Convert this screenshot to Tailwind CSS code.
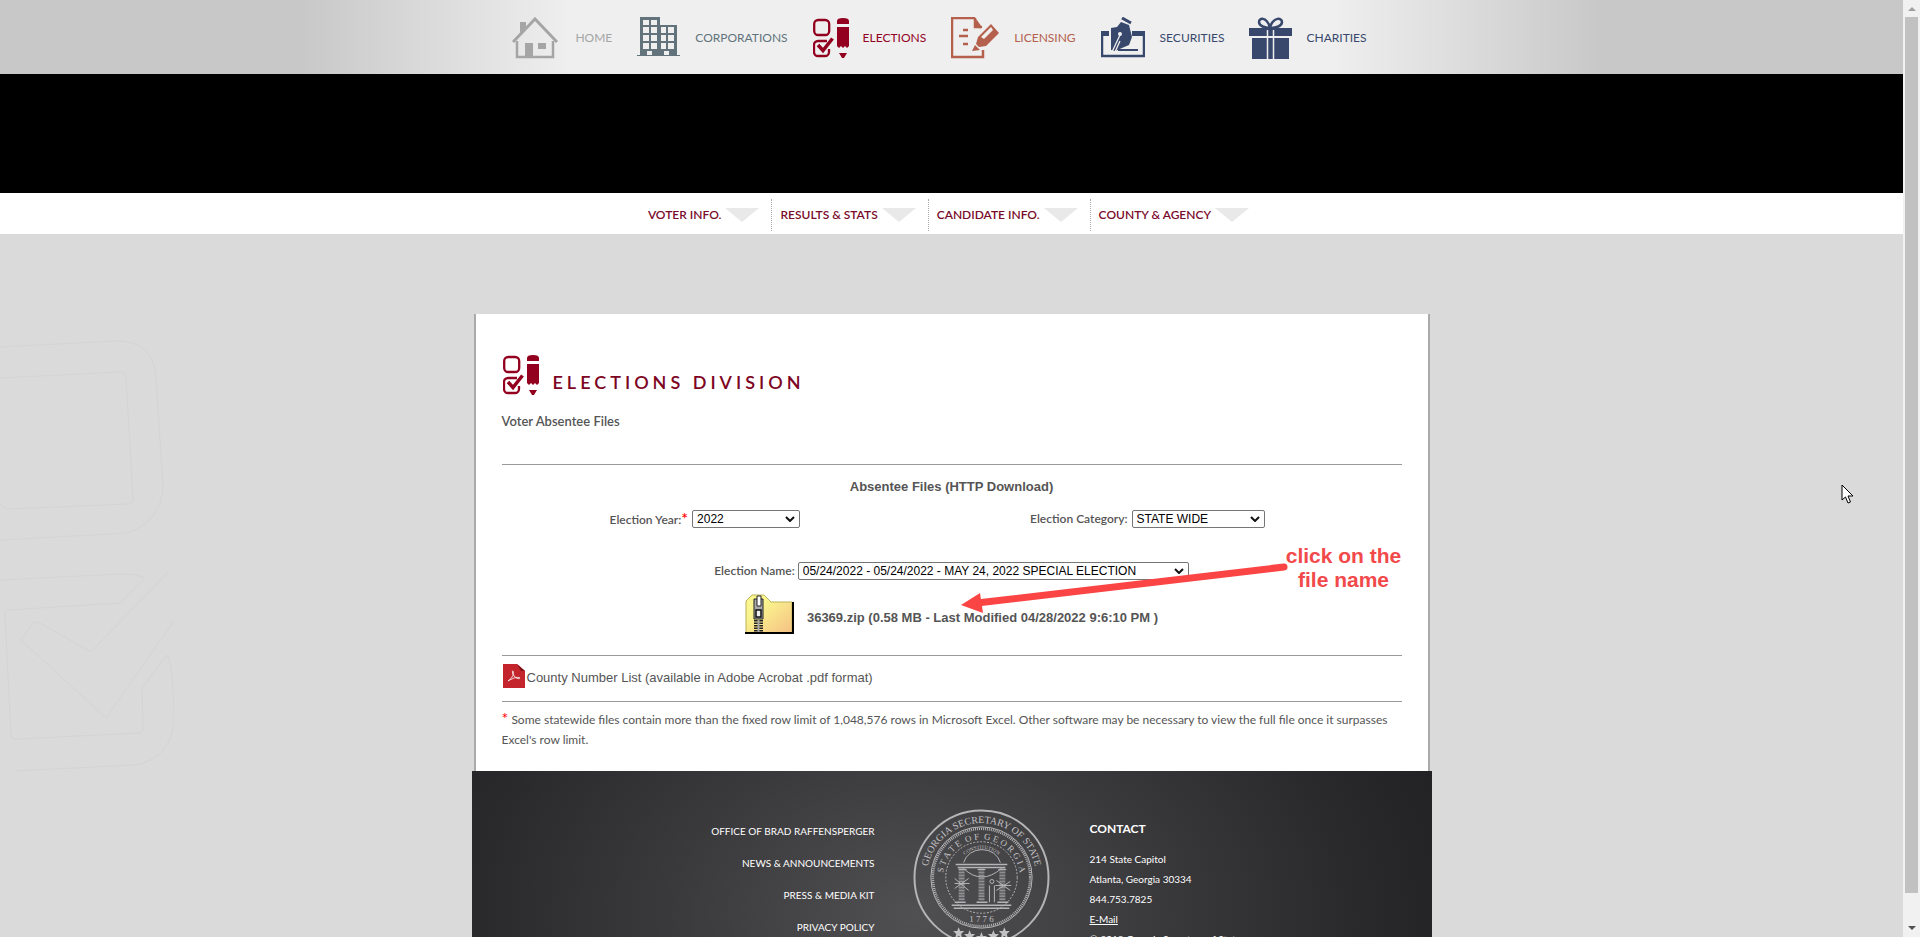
<!DOCTYPE html>
<html lang="en">
<head>
<meta charset="utf-8">
<title>Elections Division - Voter Absentee Files</title>
<script src="https://cdn.jsdelivr.net/npm/@tailwindcss/browser@4"></script>
</head>
<body class="flex h-screen overflow-hidden bg-[#dadada] font-['Lato',sans-serif] text-[#555]">
<svg class="hidden">
  <symbol id="elections" viewBox="0 0 36 40">
    <g fill="none" stroke="currentColor" stroke-width="2.3">
      <rect x="1.200" y="2" width="15" height="15" rx="4"/>
      <path d="M14 23H5a4 4 0 0 0-4 4v7a4 4 0 0 0 4 4h7a4 4 0 0 0 4-4v-3"/>
      <path d="M5 27l5 5.500 9.500-12" stroke-width="3.500"/>
    </g>
    <g fill="currentColor"><path d="M24 6V3q0-3 6-3t6 3v3zM24 9h12v19l-2 2-2-2-2 2-2-2-2 2-2-2zM26 35h8l-3 5h-2z"/></g>
  </symbol>
  <symbol id="chevron" viewBox="0 0 10 6"><path d="M1 1l4 4 4-4" fill="none" stroke="#111" stroke-width="2"/></symbol>
  <symbol id="drop" viewBox="0 0 34 14"><path d="M0 0h34L17 14z" fill="#e9e9e9"/></symbol>
</svg>

<div class="relative min-w-0 flex-1">
  <header>
    <nav aria-label="Divisions" class="flex h-[74px] items-center justify-center gap-[25px] bg-[linear-gradient(90deg,#c8c8c8_calc(50%_-_650px),#efefef_calc(50%_-_380px),#efefef_calc(50%_+_380px),#c8c8c8_calc(50%_+_650px))] pt-[2px] pr-6 text-xs">
      <a href="#" class="flex items-center gap-[17px] text-[#a5a5a5]">
        <svg class="h-[42px] w-[46px]" viewBox="0 0 46 42" fill="none" stroke="currentColor"><path d="M1 25L23 2l22 23" stroke-width="3"/><path d="M5 24v16h36V24" stroke-width="2.5"/><path d="M8 5h6v5l-6 6zM13 26h8v13h-8zM26 26h8v6h-8z" fill="currentColor" stroke="none"/></svg>
        HOME</a>
      <a href="#" class="flex items-center gap-[15px] text-[#62737c]">
        <svg class="h-[42px] w-[43px]" viewBox="0 0 43 42"><path d="M3 0h20v8h17v30h3v1H0v-1h3z" fill="currentColor"/><path d="M6 3h6v5H6zM14 3h6v5h-6zM6 10h6v6H6zM14 10h6v6h-6zM6 18h6v6H6zM14 18h6v6h-6zM6 26h6v6H6zM14 26h6v6h-6zM24 10h5v6h-5zM31 10h6v6h-6zM24 18h5v6h-5zM31 18h6v6h-6zM24 26h5v6h-5zM31 26h6v6h-6zM10 34h5v4h-5zM27 34h5v4h-5z" fill="#efefef"/></svg>
        CORPORATIONS</a>
      <a href="#" class="flex items-center gap-[14px] text-[#93001f]"><svg class="h-10 w-9"><use href="#elections"/></svg>ELECTIONS</a>
      <a href="#" class="flex items-center gap-[15px] text-[#b4604d]">
        <svg class="h-[42px] w-12" viewBox="0 0 48 42" fill="none" stroke="currentColor" stroke-width="2.5"><path d="M32 33v7H1V1h22l7 10M12 13h5M8 19h9M12 27h5M24 1v9h7"/><path d="M23 1l8 10h-8zM27 20L40 7l8 9-13 13-7 1-3-3zM24 28l5 5-8 1z" fill="currentColor" stroke="none"/><path d="M30 20l10-10 2 3-9 9z" fill="#efefef" stroke="none"/></svg>
        LICENSING</a>
      <a href="#" class="flex items-center gap-[15px] text-[#38486d]">
        <svg class="h-[42px] w-11" viewBox="0 0 44 42"><path d="M8 16H1v23h42V16H31" fill="none" stroke="currentColor" stroke-width="2.500"/><path d="M0 14h8v5H0zM31 14h13v5H31z" fill="currentColor"/><path d="M10 33V11l6-1 4-5 8 3 3 12-3 8-14 6z" fill="currentColor"/><path d="M21 1l9 5" stroke="currentColor" stroke-width="3"/><path d="M11 35l8-17M14 35l5-11" stroke="#efefef" stroke-width="1.300"/><circle cx="19" cy="17" r="2" fill="#efefef"/><path d="M17 33h20" stroke="currentColor" stroke-width="2"/></svg>
        SECURITIES</a>
      <a href="#" class="flex items-center gap-[14px] text-[#38486d]">
        <svg class="h-[42px] w-[43px]" viewBox="0 0 43 42"><path d="M0 11h43v8H0zM3 21h37v21H3z" fill="currentColor"/><path d="M18.500 13v29M24.500 13v29" stroke="#efefef" stroke-width="1.500"/><path d="M21 11C16 11 10 9 10 5s7-6 11 5c4-11 12-9 12-5s-6 6-11 6" fill="none" stroke="currentColor" stroke-width="2.500"/></svg>
        CHARITIES</a>
    </nav>
    <div class="h-[119px] bg-black"></div>
    <nav aria-label="Elections" class="flex h-[41px] items-center justify-center bg-white pt-[2px] pr-[2px] text-xs font-semibold text-[#7a0a2a]">
      <a href="#" class="flex h-8 items-center gap-1 px-2 pr-3">VOTER INFO.<svg class="h-[14px] w-[34px]"><use href="#drop"/></svg></a>
      <a href="#" class="flex h-8 items-center gap-1 border-l border-dotted border-[#aaa] px-2 pr-3">RESULTS &amp; STATS<svg class="h-[14px] w-[34px]"><use href="#drop"/></svg></a>
      <a href="#" class="flex h-8 items-center gap-1 border-l border-dotted border-[#aaa] px-2 pr-3">CANDIDATE INFO.<svg class="h-[14px] w-[34px]"><use href="#drop"/></svg></a>
      <a href="#" class="flex h-8 items-center gap-1 border-l border-dotted border-[#aaa] px-2 pr-3">COUNTY &amp; AGENCY<svg class="h-[14px] w-[34px]"><use href="#drop"/></svg></a>
    </nav>
  </header>

  <!-- Faint ballot boxes behind the page -->
  <svg class="absolute top-[320px] left-0 h-[452px] w-[174px]" viewBox="0 10 174 452" fill="none" stroke="#d4d4d4"><path d="M0 37l115-6q38-1 41 36l7 110q-2 34-35 46L0 230M0 68l120-6q5 0 6 5l7 122q0 4-5 5L6 199l-6-5M0 270l120-6q18 0 25 4l-25 25L8 300q-3 0-3 5l6 120q0 5 6 4l121-6q5 0 5-5l-1-40 25-33q6 10 7 60c0 30-15 46-40 50L15 461M168 262l-77 80-53-30q-4-1-6 3l-11 15 85 78 70-100"/></svg>

  <div class="mx-auto mt-20 w-[960px] max-w-full">
    <main class="relative mx-[2px] border-x-2 border-[#aaa] bg-white px-[26px] pt-[41px] pb-[21px]">
      <h1 class="flex items-end gap-[14px] text-lg leading-[26px] font-semibold tracking-[4px] text-[#7d0523]"><svg class="ml-[1px] h-10 w-9 text-[#93001f]"><use href="#elections"/></svg>ELECTIONS DIVISION</h1>
      <h2 class="mt-4 text-[13px] leading-5 font-semibold">Voter Absentee Files</h2>
      <hr class="mt-[33px] border-[#999]">
      <h3 class="mt-3 text-center font-['Liberation_Sans',Arial,sans-serif] text-[13px] leading-5 font-bold">Absentee Files (HTTP Download)</h3>
      <form>
        <div class="mt-[13px] flex gap-[230px] pl-[108px] text-xs">
          <div class="flex items-center"><label for="year" class="mr-1 font-semibold">Election Year:<span class="text-base leading-4 text-[#f00]">*</span></label>
            <span class="relative flex items-center"><select id="year" class="h-[18px] w-[108px] appearance-none rounded-[2px] border border-[#767676] bg-white pl-1 font-['Liberation_Sans',Arial,sans-serif] text-xs leading-4 text-black"><option>2022</option></select><svg class="pointer-events-none absolute right-[5px] h-[6px] w-[10px]"><use href="#chevron"/></svg></span></div>
          <div class="flex items-center"><label for="category" class="mr-1 font-semibold">Election Category:</label>
            <span class="relative flex items-center"><select id="category" class="h-[18px] w-[133px] appearance-none rounded-[2px] border border-[#767676] bg-white pl-1 font-['Liberation_Sans',Arial,sans-serif] text-xs leading-4 text-black"><option>STATE WIDE</option></select><svg class="pointer-events-none absolute right-[5px] h-[6px] w-[10px]"><use href="#chevron"/></svg></span></div>
        </div>
        <div class="mt-[34px] flex items-center justify-center text-xs"><label for="name" class="mr-[3px] font-semibold">Election Name:</label>
          <span class="relative flex items-center"><select id="name" class="h-[18px] w-[391px] appearance-none rounded-[2px] border border-[#767676] bg-white pl-1 font-['Liberation_Sans',Arial,sans-serif] text-xs leading-4 text-black"><option>05/24/2022 - 05/24/2022 - MAY 24, 2022 SPECIAL ELECTION</option></select><svg class="pointer-events-none absolute right-[5px] h-[6px] w-[10px]"><use href="#chevron"/></svg></span></div>
      </form>
      <a href="#" class="mt-[14px] flex items-center justify-center gap-[13px] font-['Liberation_Sans',Arial,sans-serif] text-[13px] font-bold">
        <svg class="h-10 w-[49px]" viewBox="0 0 49 40"><defs><linearGradient id="folder" x1="0" y1="0" x2="1" y2="1"><stop offset="0.300" stop-color="#faf58e"/><stop offset="1" stop-color="#f5c084"/></linearGradient></defs><path d="M1 39V7l6-6h12l7 7h21v31z" fill="url(#folder)" stroke="#b9b35a"/><path d="M0 39h48V8" fill="none" stroke="#000" stroke-width="2"/><path d="M9 5h9v20H9z" fill="#aaa" stroke="#222"/><path d="M12 2h4v10h-4z" fill="#fff" stroke="#222"/><path d="M11 16h5v7h-5z" fill="#eee" stroke="#111" stroke-width="1.500"/><path d="M11 26v12M16 26v12" stroke="#222" stroke-width="4" stroke-dasharray="1.500 1"/><path d="M13.500 26v12" stroke="#aaa" stroke-width="2"/></svg>
        <span class="pt-2">36369.zip (0.58 MB - Last Modified 04/28/2022 9:6:10 PM )</span></a>
      <hr class="mt-[21px] border-[#999]">
      <a href="#" class="mt-2 flex items-center gap-[2px] pl-[1px] font-['Liberation_Sans',Arial,sans-serif] text-[13px]">
        <svg class="h-6 w-[22px]" viewBox="0 0 22 24"><path d="M0 0h14l8 7v17H0z" fill="#c4242b"/><path d="M14 0l8 7h-4z" fill="#7e1118"/><path d="M5 17c5-3 6-8 5-10-1-1-1 3 2 6 2 2 5 2 5 1s-5-1-8 1c-3 1-4 2-4 2z" fill="none" stroke="#fff" stroke-width=".8"/></svg>
        <span class="pt-1">County Number List (available in Adobe Acrobat .pdf format)</span></a>
      <hr class="mt-[13px] border-[#999]">
      <p class="mt-2 text-xs leading-5"><span class="text-base leading-4 text-[#f00]">*</span> Some statewide files contain more than the fixed row limit of 1,048,576 rows in Microsoft Excel. Other software may be necessary to view the full file once it surpasses Excel's row limit.</p>

      <!-- Callout pointing at the file name -->
      <svg class="absolute top-[245px] left-[485px] h-[60px] w-[330px]" viewBox="0 0 330 60"><path d="M16 44L323 8" stroke="#fb4544" stroke-width="7" stroke-linecap="round"/><path d="M0 46l19-12 3 20z" fill="#fb4544"/></svg>
      <p class="absolute top-[230px] left-[801px] w-[134px] text-center font-['Liberation_Sans',Arial,sans-serif] text-[21px] leading-6 font-bold text-[#f2494b]">click on the<br>file name</p>
    </main>

    <footer class="flex h-[240px] bg-[radial-gradient(ellipse_560px_400px_at_46%_60%,#504f52,#39383b_45%,#29282a_80%,#222123)] text-[10px] text-white">
      <ul class="w-[403px] pt-[50px] text-right leading-5">
        <li class="mb-3"><a href="#">OFFICE OF BRAD RAFFENSPERGER</a></li>
        <li class="mb-3"><a href="#">NEWS &amp; ANNOUNCEMENTS</a></li>
        <li class="mb-3"><a href="#">PRESS &amp; MEDIA KIT</a></li>
        <li><a href="#">PRIVACY POLICY</a></li>
      </ul>
      <svg class="mt-[38px] ml-[38px] h-[137px] w-[137px]" viewBox="0 0 138 138" role="img" aria-label="Georgia Secretary of State seal" fill="none" stroke="#b5b5b7">
        <defs><path id="outer-arc" d="M14 69a55 55 0 0 1 110 0"/><path id="inner-arc" d="M32 82A39 39 0 1 1 106 82"/><path id="arch" d="M44 65a25 25 0 0 1 50 0"/></defs>
        <circle cx="69" cy="69" r="67.500" stroke-width="2"/>
        <circle cx="69" cy="69" r="51"/><circle cx="69" cy="69" r="49" stroke-width="2.500" stroke-dasharray="1 1"/>
        <circle cx="69" cy="69" r="36" stroke-dasharray="2 1.500"/>
        <g fill="#c2c2c4" stroke="none" font-family="Liberation Serif, serif" text-anchor="middle">
          <text font-size="10"><textPath href="#outer-arc" startOffset="50%">GEORGIA SECRETARY OF STATE</textPath></text>
          <text font-size="9"><textPath href="#inner-arc" startOffset="50%">S T A T E&#160; O F&#160; G E O R G I A</textPath></text>
          <text font-size="5"><textPath href="#arch" startOffset="50%">CONSTITUTION</textPath></text>
          <text x="69" y="114" font-size="9">1 7 7 6</text>
          <path id="star" d="M46 119l1.500 4h4l-3 3 1 4-3.500-2-3.500 2 1-4-3-3h4z"/><use href="#star" x="11" y="3"/><use href="#star" x="23" y="5"/><use href="#star" x="35" y="3"/><use href="#star" x="46"/>
        </g>
        <path d="M43 56h52M45 59h48M39 97h60M41 100h56M42 94h11M64 94h11M85 94h11" stroke-width="1.500"/>
        <path d="M49 60v32M69 60v32M90 60v32" stroke-width="6" stroke-dasharray="2 1" opacity=".65"/>
        <path d="M46 61h8M65 61h8M86 61h8M51 60q18 17 38 0M51 54a19 17 0 0 1 37 0M42 70l14 12M42 80l14-10M42 75h15M84 72l14 10M84 82l14-9M83 77h16M77 77v17M82 77v17"/><circle cx="79.500" cy="73" r="2"/>
      </svg>
      <address class="ml-10 pt-12 leading-5 not-italic">
        <h4 class="mb-[10px] text-xs leading-5 font-bold">CONTACT</h4>
        <p>214 State Capitol</p><p>Atlanta, Georgia 30334</p><p>844.753.7825</p><p><a href="#" class="underline">E-Mail</a></p><p>© 2018 Georgia Secretary of State</p>
      </address>
    </footer>
  </div>

  <svg class="absolute top-[484px] left-[1841px] h-5 w-[13px]" viewBox="0 0 13 20"><path d="M1 1v15l3.500-3 2.500 6 2.500-1L7 12h5z" fill="#fff" stroke="#000"/></svg>
</div>

<div aria-hidden="true" class="flex w-[17px] flex-col items-center bg-[#f1f1f1]">
  <svg class="h-[17px] w-2 shrink-0" viewBox="0 0 8 17"><path d="M0 11l4-4 4 4z" fill="#a0a0a0"/></svg>
  <div class="mb-[27px] w-[13px] flex-1 bg-[#c1c1c1]"></div>
  <svg class="h-[17px] w-2 shrink-0" viewBox="0 0 8 17"><path d="M0 6l4 4 4-4z" fill="#505050"/></svg>
</div>
</body>
</html>
